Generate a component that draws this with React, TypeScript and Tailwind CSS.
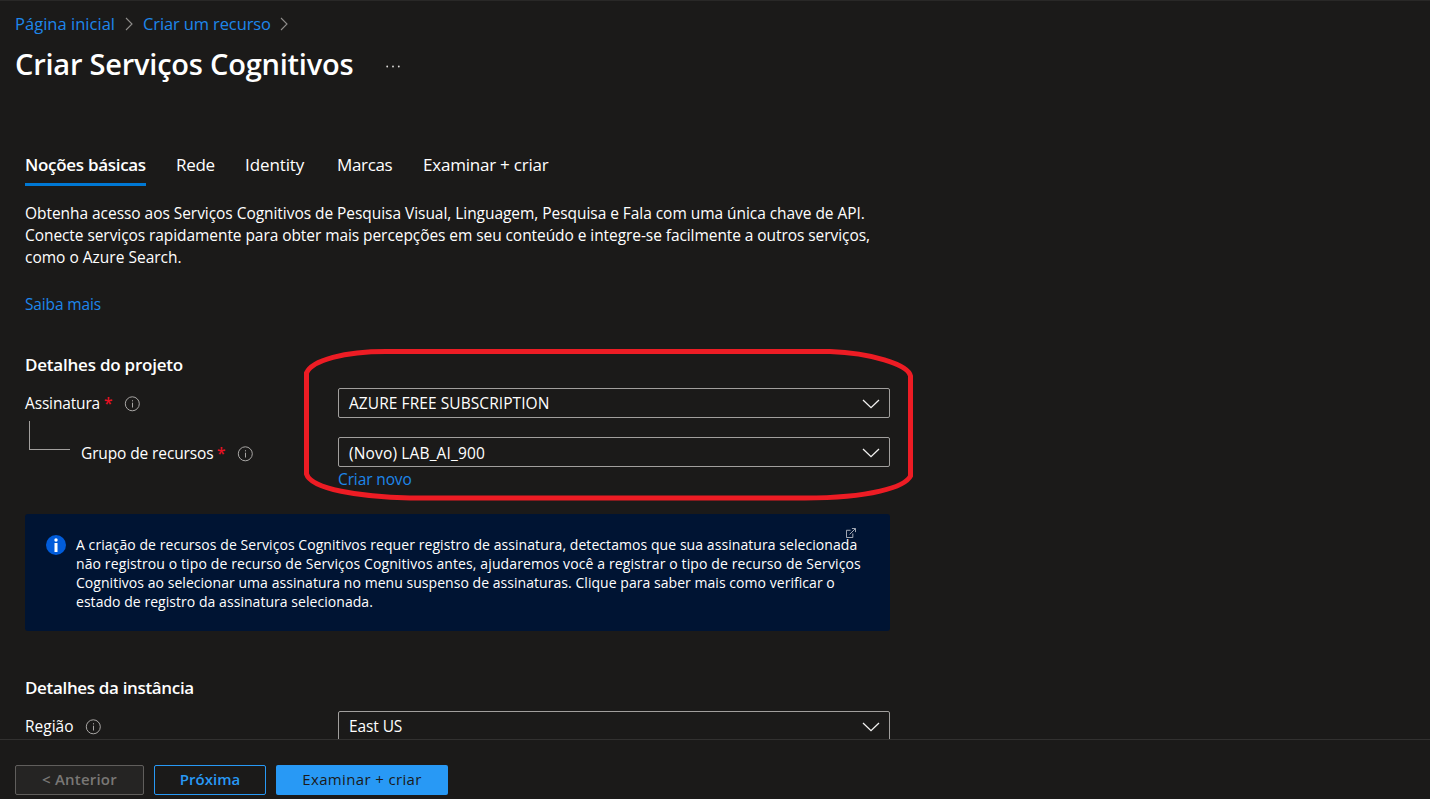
import type { ReactNode } from "react";

function Crumb() {
  return (
    <svg width="9" height="14" viewBox="0 0 9 14" fill="none" stroke="#8f8d8b" strokeWidth="1.1">
      <path d="M1 1l6 6-6 6" />
    </svg>
  );
}

function InfoOutline() {
  return (
    <svg className="mt-px" width="16" height="16" viewBox="0 0 16 16" fill="none" stroke="#a9a7a5">
      <circle cx="8.300" cy="7.800" r="7" />
      <path d="M8.500 6.700v4.800" />
      <path d="M8.500 4.200v1.200" />
    </svg>
  );
}

function Required() {
  return <span className="w-5 font-semibold text-[#e81123]">*</span>;
}

function Select({ children }: { children: ReactNode }) {
  return (
    <div className="flex h-[30px] w-[552px] shrink-0 items-center justify-between rounded-[2px] border border-[#a19f9d] pr-[9px] pl-[10px]">
      {children}
      <svg className="mt-[2px]" width="18" height="10" viewBox="0 0 18 10" fill="none" stroke="#f3f2f1" strokeWidth="1.3">
        <path d="M1 1l8 7.700L17 1" />
      </svg>
    </div>
  );
}

export default function App() {
  return (
    <div className="relative flex h-[799px] w-[1430px] flex-col overflow-hidden border-t border-[#292827] bg-[#1b1a19] font-['Open_Sans','Noto_Sans',sans-serif] text-[15.5px] leading-[22px] whitespace-nowrap text-white">
      <header className="flex h-[138px] shrink-0 flex-col pt-[11px] pl-[15px]">
        <nav className="flex h-6 items-center text-[16.5px] leading-6 text-[#1e87eb]">
          <a className="w-[110px] tracking-[0.03px]">Página inicial</a>
          <Crumb />
          <a className="ml-[9px] w-[137px] tracking-[-0.12px]">Criar um recurso</a>
          <Crumb />
        </nav>
        <div className="mt-[8px] flex h-10 items-center">
          <h1 className="w-[371px] text-[29px] leading-10 font-semibold tracking-[-0.22px]">Criar Serviços Cognitivos</h1>
          <svg className="mt-[4px]" width="14" height="3" viewBox="0 0 14 3" fill="#e1dfdd">
            <circle cx="1.200" cy="1.500" r="0.900" />
            <circle cx="7" cy="1.500" r="0.900" />
            <circle cx="12.800" cy="1.500" r="0.900" />
          </svg>
        </div>
      </header>

      <main className="flex h-[600px] shrink-0 flex-col overflow-hidden pl-[25px]">
        <div className="flex h-[47px] text-[17px] leading-[51px]">
          <div className="h-[47px] w-[121px] border-b-[3px] border-[#0078d4] font-semibold tracking-[-0.3px]">Noções básicas</div>
          <div className="ml-[30px] w-[69px] tracking-[-0.3px]">Rede</div>
          <div className="w-[92px] tracking-[-0.1px]">Identity</div>
          <div className="w-[86px] tracking-[-0.35px]">Marcas</div>
          <div className="tracking-[-0.22px]">Examinar + criar</div>
        </div>

        <div className="mt-[16px] flex flex-col">
          <span className="tracking-[-0.047px]">Obtenha acesso aos Serviços Cognitivos de Pesquisa Visual, Linguagem, Pesquisa e Fala com uma única chave de API.</span>
          <span className="tracking-[-0.07px]">Conecte serviços rapidamente para obter mais percepções em seu conteúdo e integre-se facilmente a outros serviços,</span>
          <span>como o Azure Search.</span>
        </div>
        <a className="mt-[25px] tracking-[-0.15px] text-[#1e87eb]">Saiba mais</a>

        <h2 className="mt-[38px] text-[17px] leading-6 font-semibold tracking-[-0.22px]">Detalhes do projeto</h2>

        <div className="mt-[11px] flex h-[30px] items-center">
          <div className="flex w-[313px] items-center">
            <span className="w-[79px] tracking-[-0.15px]">Assinatura</span>
            <Required />
            <InfoOutline />
          </div>
          <Select><span className="tracking-[0.07px]">AZURE FREE SUBSCRIPTION</span></Select>
        </div>

        <div className="mt-[3px] flex h-[46px]">
          <div className="ml-1 h-[29px] w-[41px] border-b border-l border-[#a19f9d]" />
          <div className="ml-[11px] flex w-[257px] items-center pt-[18px]">
            <span className="w-[136px] tracking-[-0.12px]">Grupo de recursos</span>
            <Required />
            <InfoOutline />
          </div>
          <div className="pt-4">
            <Select><span className="pt-[2px] tracking-[0.15px]">(Novo) LAB_AI_900</span></Select>
          </div>
        </div>
        <a className="mt-px ml-[313px] tracking-[-0.12px] text-[#1e87eb]">Criar novo</a>

        <section className="mt-[24px] flex h-[117px] w-[865px] shrink-0 rounded-[3px] bg-[#001433] pt-[21px] pl-[21px] text-[14px] leading-[19px]">
          <svg className="shrink-0" width="20" height="20" viewBox="0 0 20 20">
            <circle cx="10" cy="10" r="10" fill="#015cda" />
            <circle cx="10" cy="5" r="1.700" fill="#fff" />
            <rect x="8.500" y="8" width="3" height="9" fill="#fff" />
          </svg>
          <div className="relative ml-[10px] flex flex-col">
            <span className="tracking-[0.065px]">A criação de recursos de Serviços Cognitivos requer registro de assinatura, detectamos que sua assinatura selecionada</span>
            <span className="tracking-[0.112px]">não registrou o tipo de recurso de Serviços Cognitivos antes, ajudaremos você a registrar o tipo de recurso de Serviços</span>
            <span className="tracking-[0.045px]">Cognitivos ao selecionar uma assinatura no menu suspenso de assinaturas. Clique para saber mais como verificar o</span>
            <span className="tracking-[0.045px]">estado de registro da assinatura selecionada.</span>
            <svg className="absolute -top-[7px] left-[770px]" width="10" height="10" viewBox="0 0 11 11" fill="none" stroke="#b8bdc6">
              <path d="M5 2.500H.5v8h7V6M4 7l6-6M6.500.5h4v4" />
            </svg>
          </div>
        </section>

        <h2 className="mt-[45px] text-[17px] leading-6 font-semibold tracking-[-0.34px]">Detalhes da instância</h2>
        <div className="mt-[11px] flex h-[30px] shrink-0 items-center">
          <div className="flex w-[313px] items-center">
            <span className="w-[60px]">Região</span>
            <InfoOutline />
          </div>
          <Select><span className="tracking-[-0.1px]">East US</span></Select>
        </div>
      </main>

      <footer className="flex h-[60px] shrink-0 gap-[10px] border-t border-[#323130] pt-[25px] pl-[15px] text-[15px] font-semibold">
        <button className="h-[30px] w-[129px] rounded-[2px] border border-[#605e5c] bg-[#252423] pb-[2px] tracking-[0.2px] text-[#797775]">&lt; Anterior</button>
        <button className="h-[30px] w-[112px] rounded-[2px] border border-[#2899f5] pb-[2px] text-[#2899f5]">Próxima</button>
        <button className="h-[30px] w-[172px] rounded-[2px] bg-[#2899f5] pb-[2px] font-medium tracking-[0.35px] text-[#1b1a19]">Examinar + criar</button>
      </footer>

      <svg className="pointer-events-none absolute top-[346px] left-[302px]" width="614" height="156" viewBox="302 347 614 156" fill="none" stroke="#ed1c24" strokeWidth="5">
        <path d="M306.500 373C312 360 345 351.500 386 351.500H830C870 353 908 364 910.500 376V476C905 487 870 498 805 498H410C360 497 311 489 306.500 474Z" />
      </svg>
    </div>
  );
}
